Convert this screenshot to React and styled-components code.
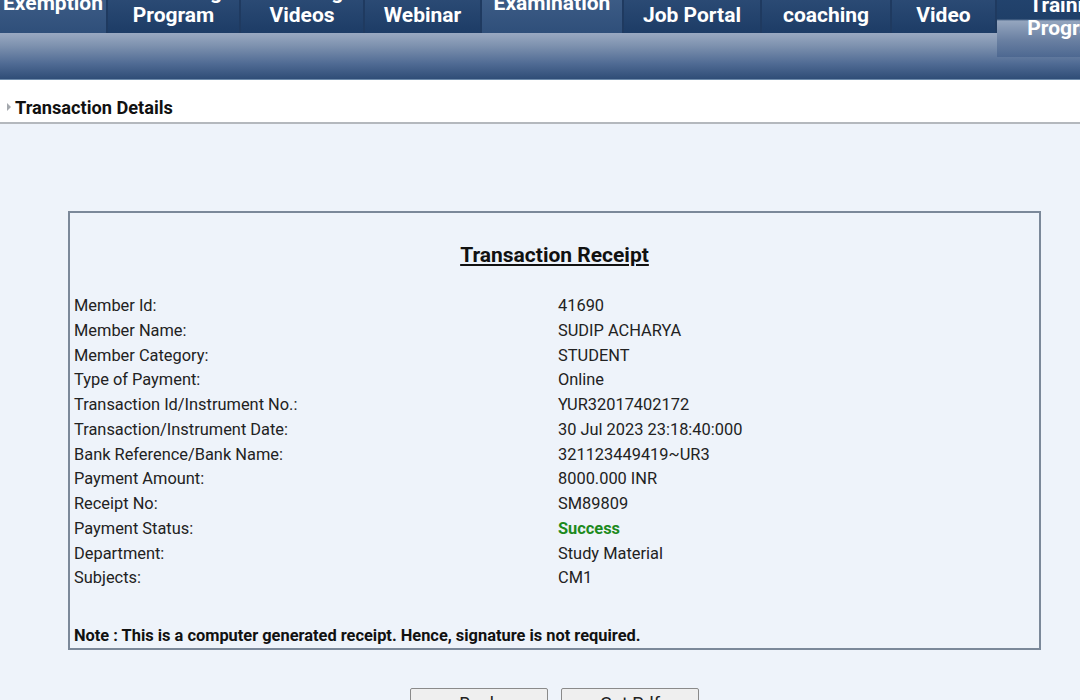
import React from 'react';
import styled, { createGlobalStyle } from 'styled-components';

const GlobalStyle = createGlobalStyle`
  html, body {
    margin: 0;
    padding: 0;
    background: #eef3fa;
    font-family: Roboto, "Liberation Sans", Arial, sans-serif;
    overflow: hidden;
  }
`;

const Header = styled.div`
  display: flex;
  flex-direction: column;
  height: 80px;
  background: linear-gradient(
    to bottom,
    #1f3a60 0px,
    #1f3a60 33px,
    #9aa9c2 33px,
    #7f93b0 45px,
    #4f6a93 64px,
    #2f4d77 79px
  );
  border-bottom: 1px solid #6f8cac;
  box-sizing: border-box;
  overflow: hidden;
`;

const Tabs = styled.div`
  display: flex;
  gap: 2px;
  margin-top: -26px;
  height: 59px;
  align-items: flex-start;
`;

const Tab = styled.div`
  flex: none;
  width: ${p => p.w}px;
  height: ${p => (p.tall ? 83 : 59)}px;
  display: flex;
  flex-direction: column;
  align-items: center;
  justify-content: ${p => (p.tall ? 'flex-start' : 'center')};
  padding-top: ${p => (p.tall ? '20px' : '0')};
  box-sizing: border-box;
  background: ${p =>
    p.tall
      ? 'linear-gradient(to bottom, #264773 0px, #1f3f68 45px, #95a6bf 47px, #6a80a2 66px, #4d6891 83px)'
      : p.light
      ? 'linear-gradient(to bottom, #46658e, #2f4f7a)'
      : 'linear-gradient(to bottom, #35557f, #1d3c66)'};
  color: #ffffff;
  font-weight: 700;
  font-size: 21px;
  line-height: 23px;
  text-align: center;
  white-space: nowrap;
`;

const SectionBar = styled.div`
  height: 44px;
  background: #ffffff;
  border-bottom: 2px solid #b4b8bd;
  display: flex;
  align-items: center;
  padding-left: 7px;
  gap: 4px;
  box-sizing: border-box;
`;

const Arrow = styled.span`
  width: 0;
  height: 0;
  border-top: 4px solid transparent;
  border-bottom: 4px solid transparent;
  border-left: 4px solid #a4a8ad;
  margin-top: 12px;
`;

const SectionTitle = styled.h2`
  margin: 0;
  font-size: 18.2px;
  font-weight: 700;
  color: #111;
  margin-top: 12px;
`;

const Content = styled.div`
  padding: 87px 39px 0 68px;
`;

const Receipt = styled.div`
  border: 2px solid #7b8899;
  padding: 30px 4px 4px 4px;
  box-sizing: border-box;
  width: 973px;
  height: 439px;
`;

const ReceiptTitle = styled.h3`
  margin: 0 0 27px 0;
  text-align: center;
  font-size: 21px;
  font-weight: 700;
  text-decoration: underline;
  color: #111;
`;

const DetailsTable = styled.div`
  display: grid;
  grid-template-columns: 484px 1fr;
  font-size: 16.4px;
  line-height: 24.75px;
  color: #222;
`;

const Label = styled.div``;

const Value = styled.div`
  color: ${p => (p.success ? '#1d8a1d' : '#222')};
  font-weight: ${p => (p.success ? 700 : 400)};
`;

const Note = styled.div`
  margin-top: 35px;
  font-size: 16.4px;
  font-weight: 700;
  color: #111;
`;

const Buttons = styled.div`
  display: flex;
  justify-content: center;
  gap: 13px;
  padding-top: 38px;
`;

const Button = styled.button`
  width: 138px;
  height: 34px;
  background: #efefef;
  border: 1px solid #8a8a8a;
  border-radius: 2px;
  font-family: Roboto, "Liberation Sans", Arial, sans-serif;
  font-size: 18px;
  color: #222;
  padding: 0;
  padding-top: 4px;
  display: flex;
  justify-content: center;
`;

const tabs = [
  { w: 106, lines: ['Exemption'], light: true },
  { w: 131, lines: ['Mentoring', 'Program'] },
  { w: 122, lines: ['Learning', 'Videos'] },
  { w: 115, lines: ['Live', 'Webinar'] },
  { w: 140, lines: ['Examination'], light: true },
  { w: 136, lines: ['Student', 'Job Portal'] },
  { w: 128, lines: ['Online', 'coaching'] },
  { w: 103, lines: ['Recorded', 'Video'] },
  { w: 142, lines: ['Training', 'Program'], tall: true },
];

const details = [
  ['Member Id:', '41690'],
  ['Member Name:', 'SUDIP ACHARYA'],
  ['Member Category:', 'STUDENT'],
  ['Type of Payment:', 'Online'],
  ['Transaction Id/Instrument No.:', 'YUR32017402172'],
  ['Transaction/Instrument Date:', '30 Jul 2023 23:18:40:000'],
  ['Bank Reference/Bank Name:', '321123449419~UR3'],
  ['Payment Amount:', '8000.000 INR'],
  ['Receipt No:', 'SM89809'],
  ['Payment Status:', 'Success', true],
  ['Department:', 'Study Material'],
  ['Subjects:', 'CM1'],
];

export default function App() {
  return (
    <>
      <GlobalStyle />
      <Header>
        <Tabs>
          {tabs.map((t, i) => (
            <Tab key={i} w={t.w} light={t.light} tall={t.tall}>
              {t.lines.map((l, j) => (
                <div key={j}>{l}</div>
              ))}
            </Tab>
          ))}
        </Tabs>
      </Header>
      <SectionBar>
        <Arrow />
        <SectionTitle>Transaction Details</SectionTitle>
      </SectionBar>
      <Content>
        <Receipt>
          <ReceiptTitle>Transaction Receipt</ReceiptTitle>
          <DetailsTable>
            {details.map(([label, value, success]) => (
              <React.Fragment key={label}>
                <Label>{label}</Label>
                <Value success={success}>{value}</Value>
              </React.Fragment>
            ))}
          </DetailsTable>
          <Note>Note : This is a computer generated receipt. Hence, signature is not required.</Note>
        </Receipt>
        <Buttons>
          <Button>Back</Button>
          <Button>Get Pdf</Button>
        </Buttons>
      </Content>
    </>
  );
}
